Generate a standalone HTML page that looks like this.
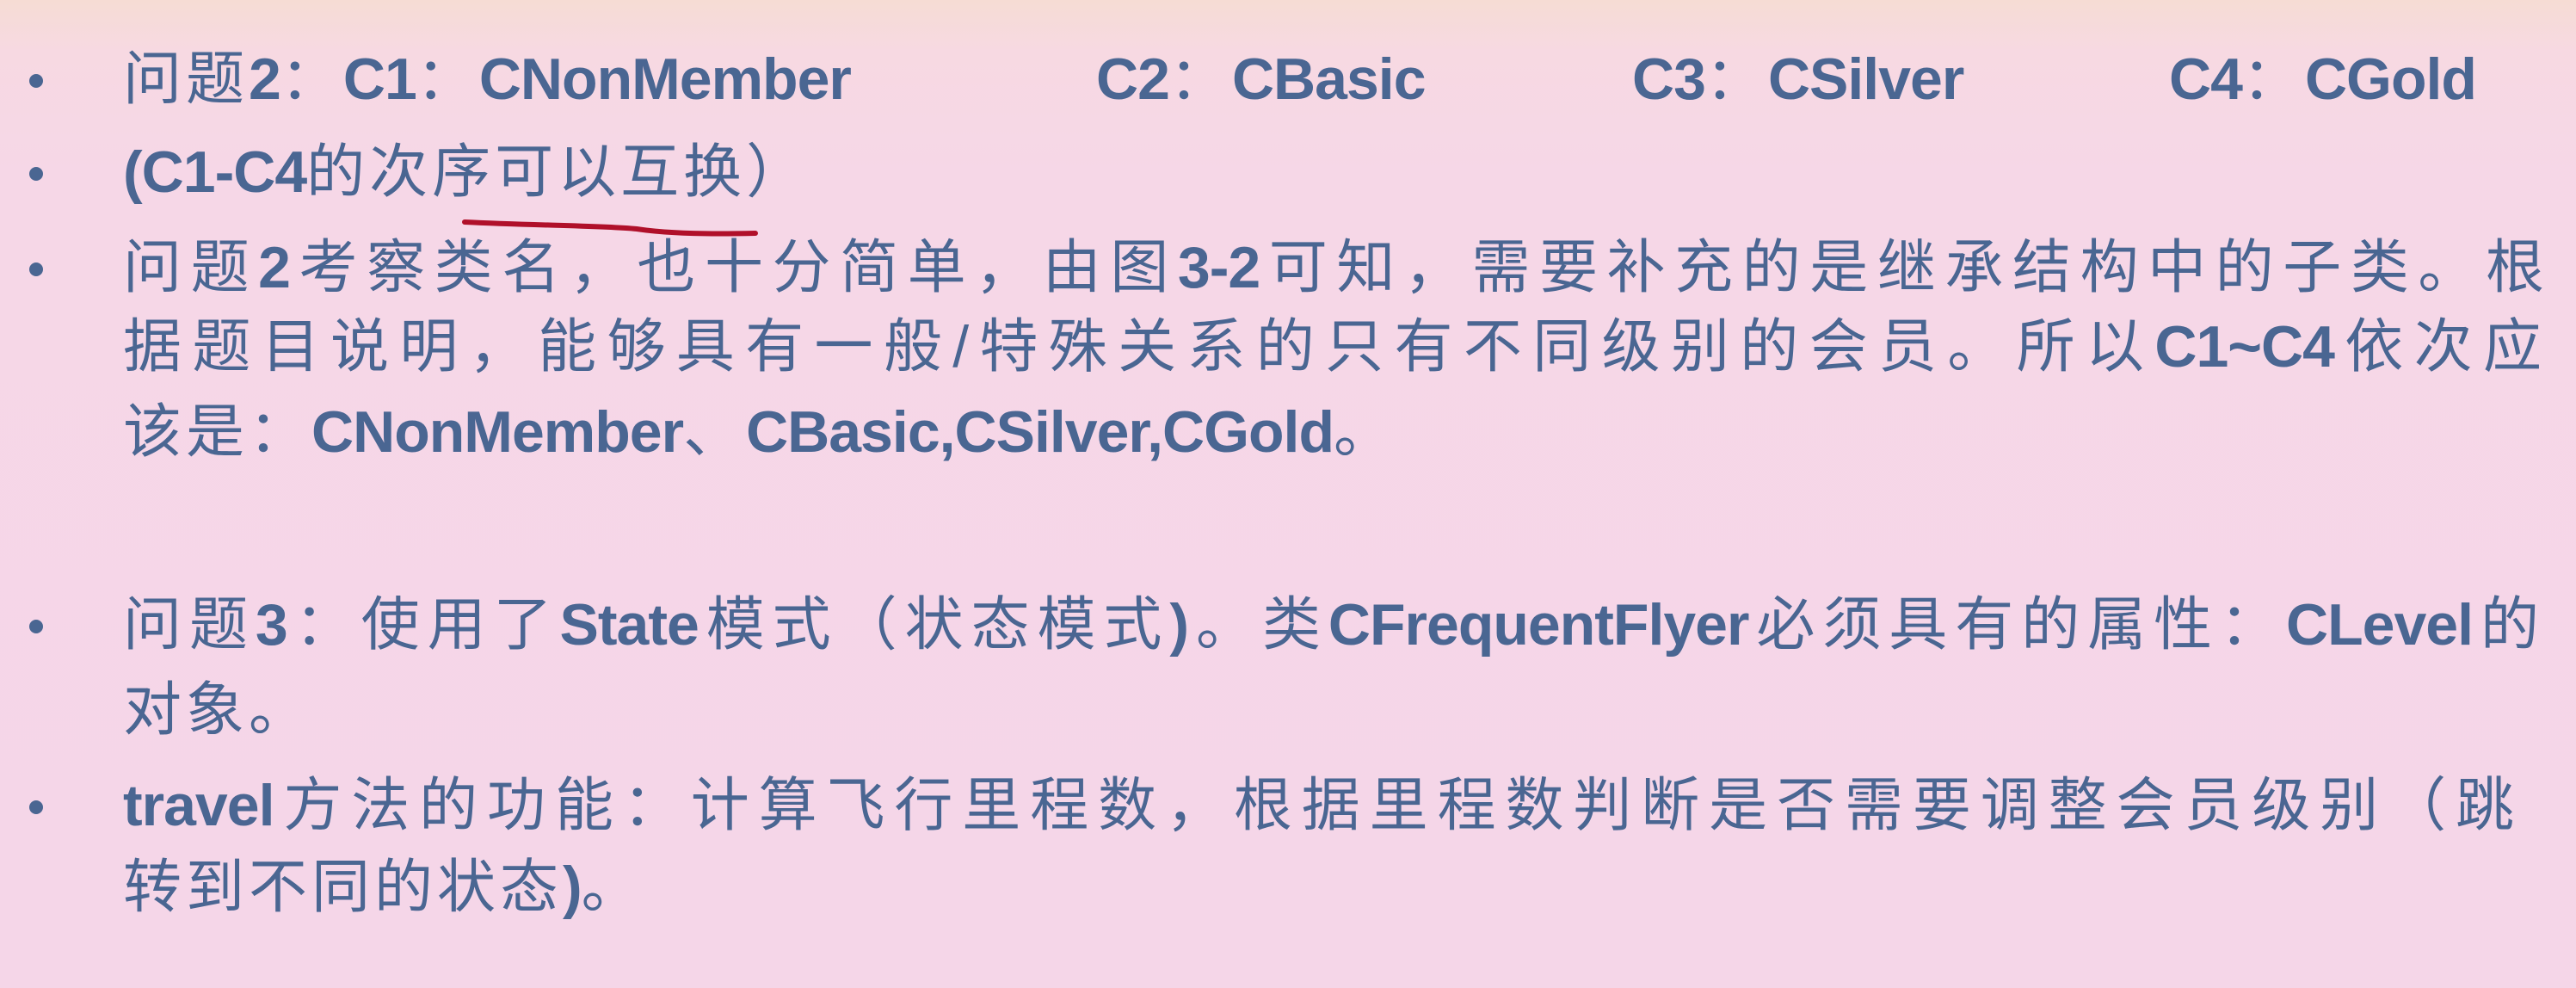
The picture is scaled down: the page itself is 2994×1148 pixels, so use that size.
<!DOCTYPE html>
<html><head><meta charset="utf-8"><style>
html,body{margin:0;padding:0}
body{width:2994px;height:1148px;overflow:hidden;background:linear-gradient(#f6dcd4 0px,#f7d9e2 60px,#f6d7e7 200px,#f5d6e8 1148px);position:relative;
font-family:"Liberation Sans","Noto Sans CJK SC",sans-serif;color:#4a6692;}
.l{position:absolute;left:143px;font-size:68px;line-height:80px;letter-spacing:5px;white-space:nowrap}
.j{text-align:justify;text-align-last:justify;white-space:normal;letter-spacing:0}
b{font-weight:bold;letter-spacing:-1px}
.dot{position:absolute;left:34px;width:16px;height:16px;border-radius:50%;background:#4a6692}
span.a{position:absolute;top:0}
</style></head><body>
<div class="dot" style="top:86px"></div>
<div class="dot" style="top:194px"></div>
<div class="dot" style="top:305px"></div>
<div class="dot" style="top:720px"></div>
<div class="dot" style="top:930px"></div>

<div class="l" style="top:52px;width:2850px;height:80px">
<span class="a" style="left:0">问题<b>2</b>：<b>C1</b>：<b>CNonMember</b></span>
<span class="a" style="left:1131px"><b>C2</b>：<b>CBasic</b></span>
<span class="a" style="left:1754px"><b>C3</b>：<b>CSilver</b></span>
<span class="a" style="left:2378px"><b>C4</b>：<b>CGold</b></span>
</div>
<div class="l" style="top:160px"><b>(C1-C4</b>的次序可以互换）</div>
<svg style="position:absolute;left:0;top:0" width="2994" height="1148"><path d="M540 258 C620 262 700 262 740 266 C780 272 830 272 878 271" stroke="#b0102a" stroke-width="6" fill="none" stroke-linecap="round"/></svg>
<div class="l j" style="top:271px;width:2814px">问题<b>2</b>考察类名，也十分简单，由图<b>3-2</b>可知，需要补充的是继承结构中的子类。根</div>
<div class="l j" style="top:363px;width:2811px">据题目说明，能够具有一般/特殊关系的只有不同级别的会员。所以<b>C1~C4</b>依次应</div>
<div class="l" style="top:462px">该是：<b>CNonMember</b>、<b>CBasic,CSilver,CGold</b>。</div>
<div class="l j" style="top:686px;width:2808px">问题<b>3</b>：使用了<b>State</b>模式（状态模式<b>)</b>。类<b>CFrequentFlyer</b>必须具有的属性：<b>CLevel</b>的</div>
<div class="l" style="top:785px">对象。</div>
<div class="l j" style="top:896px;width:2779px"><b>travel</b>方法的功能：计算飞行里程数，根据里程数判断是否需要调整会员级别（跳</div>
<div class="l" style="top:991px">转到不同的状态<b>)</b>。</div>
</body></html>
